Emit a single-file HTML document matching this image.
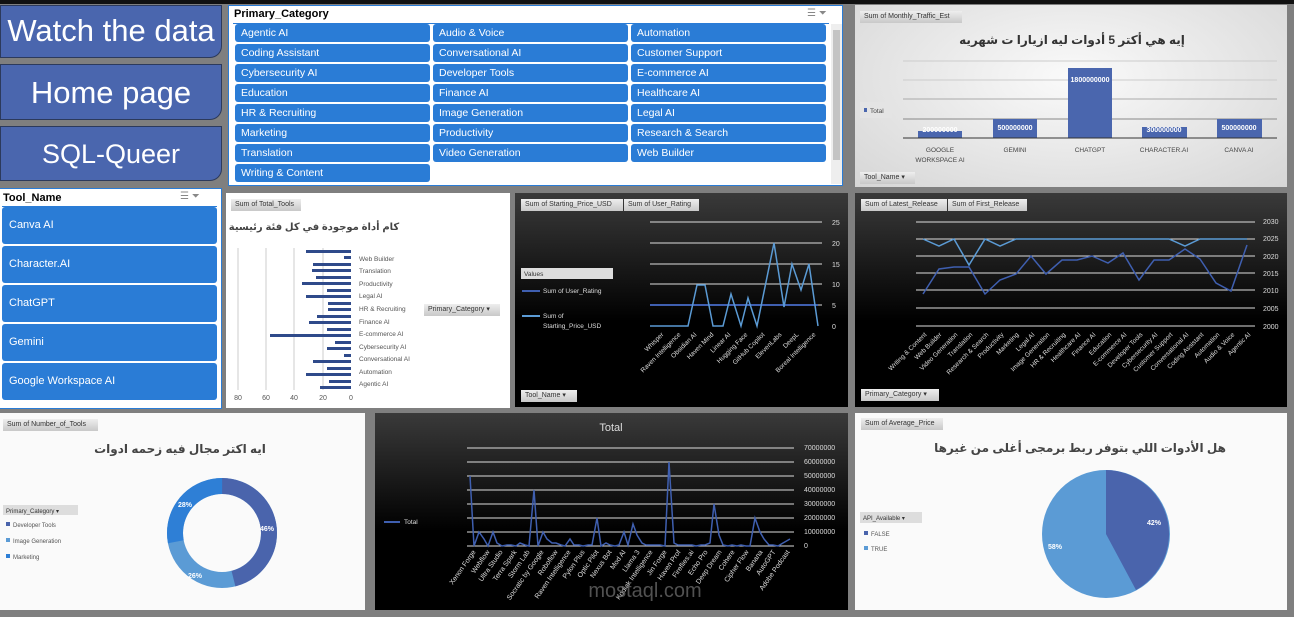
<!DOCTYPE html>
<html><head><meta charset="utf-8"><style>
*{margin:0;padding:0;box-sizing:border-box}
body{width:1294px;height:617px;background:#7f7f7f;position:relative;overflow:hidden;font-family:"Liberation Sans","Noto Sans CJK SC",sans-serif}
.a{position:absolute}
.btn{position:absolute;left:0;width:222px;background:#4a66ae;border:1px solid #2c3a5c;border-radius:0 0 12px 0;color:#fff;text-align:center;font-size:31px}
.it{position:absolute;height:18px;background:#2a7cd6;border-radius:3px;color:#fff;font-size:10.5px;line-height:18px;padding-left:6px}
.ti{position:absolute;left:2px;width:215px;height:37px;background:#2a7cd6;border-radius:3px;color:#fff;font-size:11px;line-height:37px;padding-left:7px}
.tag{position:absolute;background:linear-gradient(#eee,#c8c8c8);font-size:7px;color:#333;padding:2px 4px;height:12px;line-height:8px}
svg text{font-family:"Liberation Sans","DejaVu Sans",sans-serif}
</style></head><body>
<div class="a" style="left:0;top:0;width:1294px;height:4px;background:#111"></div>
<div class="btn" style="top:5px;height:53px;line-height:50px">Watch the data</div>
<div class="btn" style="top:64px;height:56px;line-height:56px">Home page</div>
<div class="btn" style="top:126px;height:55px;line-height:55px;font-size:27px">SQL-Queer</div>

<div class="a" style="left:228px;top:5px;width:615px;height:181px;background:#fff;border:1px solid #2a7cd6">
<div class="a" style="left:5px;top:2px;font-size:11px;font-weight:bold">Primary_Category</div>
<div class="a" style="left:578px;top:2px;font-size:10px;color:#888">☰ ⏷</div>
<div class="a" style="left:4px;top:17px;width:596px;height:1px;background:#2a7cd6"></div>
<div class="a" style="left:602px;top:18px;width:11px;height:160px;background:#eee"><div style="margin:6px 2px;height:130px;background:#c4c4c4"></div></div>
</div>
<div class="it" style="left:235px;top:24px;width:195px">Agentic AI</div><div class="it" style="left:433px;top:24px;width:195px">Audio &amp; Voice</div><div class="it" style="left:631px;top:24px;width:195px">Automation</div>
<div class="it" style="left:235px;top:44px;width:195px">Coding Assistant</div><div class="it" style="left:433px;top:44px;width:195px">Conversational AI</div><div class="it" style="left:631px;top:44px;width:195px">Customer Support</div>
<div class="it" style="left:235px;top:64px;width:195px">Cybersecurity AI</div><div class="it" style="left:433px;top:64px;width:195px">Developer Tools</div><div class="it" style="left:631px;top:64px;width:195px">E-commerce AI</div>
<div class="it" style="left:235px;top:84px;width:195px">Education</div><div class="it" style="left:433px;top:84px;width:195px">Finance AI</div><div class="it" style="left:631px;top:84px;width:195px">Healthcare AI</div>
<div class="it" style="left:235px;top:104px;width:195px">HR &amp; Recruiting</div><div class="it" style="left:433px;top:104px;width:195px">Image Generation</div><div class="it" style="left:631px;top:104px;width:195px">Legal AI</div>
<div class="it" style="left:235px;top:124px;width:195px">Marketing</div><div class="it" style="left:433px;top:124px;width:195px">Productivity</div><div class="it" style="left:631px;top:124px;width:195px">Research &amp; Search</div>
<div class="it" style="left:235px;top:144px;width:195px">Translation</div><div class="it" style="left:433px;top:144px;width:195px">Video Generation</div><div class="it" style="left:631px;top:144px;width:195px">Web Builder</div>
<div class="it" style="left:235px;top:164px;width:195px">Writing &amp; Content</div>

<div class="a" style="left:0;top:188px;width:222px;height:221px;background:#fff;border:1px solid #2a7cd6;border-left:none">
<div class="a" style="left:3px;top:3px;font-size:11px;font-weight:bold">Tool_Name</div>
<div class="a" style="left:180px;top:2px;font-size:10px;color:#888">☰ ⏷</div>
<div class="a" style="left:2px;top:17px;width:215px;height:1px;background:#2a7cd6"></div>
</div>
<div class="ti" style="top:207px">Canva AI</div>
<div class="ti" style="top:246px">Character.AI</div>
<div class="ti" style="top:285px">ChatGPT</div>
<div class="ti" style="top:324px">Gemini</div>
<div class="ti" style="top:363px">Google Workspace AI</div>

<div class="a" style="left:855px;top:5px;width:432px;height:182px;background:radial-gradient(ellipse at 50% 40%,#fafafa,#d6d6d6)"></div>
<svg class="a" style="left:0;top:0" width="1294" height="617">
<g font-size="6.5" fill="#444">
<line x1="903" y1="61" x2="1277" y2="61" stroke="#ccc"/><line x1="903" y1="80" x2="1277" y2="80" stroke="#ccc"/><line x1="903" y1="99" x2="1277" y2="99" stroke="#aaa"/><line x1="903" y1="119" x2="1277" y2="119" stroke="#888"/>
<rect x="918" y="131" width="44" height="7" fill="#4a66ae"/><rect x="993" y="119" width="44" height="19" fill="#4a66ae"/><rect x="1068" y="68" width="44" height="70" fill="#4a66ae"/><rect x="1142" y="127" width="45" height="11" fill="#4a66ae"/><rect x="1217" y="119" width="45" height="19" fill="#4a66ae"/>
<line x1="903" y1="138" x2="1277" y2="138" stroke="#333"/>
<g fill="#fff" font-weight="bold" font-size="7" text-anchor="middle"><text x="940" y="132">200000000</text><text x="1015" y="130">500000000</text><text x="1090" y="82">1800000000</text><text x="1164" y="132">300000000</text><text x="1239" y="130">500000000</text></g>
<g text-anchor="middle"><text x="940" y="152">GOOGLE</text><text x="940" y="162">WORKSPACE AI</text><text x="1015" y="152">GEMINI</text><text x="1090" y="152">CHATGPT</text><text x="1164" y="152">CHARACTER.AI</text><text x="1239" y="152">CANVA AI</text></g>
<rect x="860" y="102" width="32" height="16" fill="#e4e4e4"/><rect x="864" y="108" width="3" height="4" fill="#4a66ae"/><text x="870" y="113">Total</text>
</g>
<text x="1072" y="44" font-size="12" font-weight="bold" fill="#333" text-anchor="middle" font-family="DejaVu Sans">إيه هي أكتر 5 أدوات ليه ازيارا ت شهريه</text>
</svg>
<div class="tag" style="left:860px;top:11px;width:102px">Sum of Monthly_Traffic_Est</div>
<div class="tag" style="left:860px;top:172px;width:55px">Tool_Name ▾</div>

<div class="a" style="left:226px;top:193px;width:284px;height:215px;background:#fff"></div>
<div class="tag" style="left:231px;top:199px;width:70px">Sum of Total_Tools</div>
<div class="tag" style="left:424px;top:304px;width:76px">Primary_Category ▾</div>
<svg class="a" style="left:0;top:0" width="1294" height="617">
<g stroke="#ccc"><line x1="238" y1="248" x2="238" y2="390"/><line x1="266" y1="248" x2="266" y2="390"/><line x1="294" y1="248" x2="294" y2="390"/><line x1="323" y1="248" x2="323" y2="390"/></g>
<g fill="#2f4a8a">
<rect x="306" y="250" width="45" height="3"/><rect x="344" y="256" width="7" height="3"/><rect x="313" y="263" width="38" height="3"/><rect x="312" y="269" width="39" height="3"/><rect x="316" y="276" width="35" height="3"/><rect x="302" y="282" width="49" height="3"/><rect x="327" y="289" width="24" height="3"/><rect x="306" y="295" width="45" height="3"/><rect x="328" y="302" width="23" height="3"/><rect x="328" y="308" width="23" height="3"/><rect x="317" y="315" width="34" height="3"/><rect x="309" y="321" width="42" height="3"/><rect x="327" y="328" width="24" height="3"/><rect x="270" y="334" width="81" height="3"/><rect x="335" y="341" width="16" height="3"/><rect x="327" y="347" width="24" height="3"/><rect x="344" y="354" width="7" height="3"/><rect x="313" y="360" width="38" height="3"/><rect x="327" y="367" width="24" height="3"/><rect x="306" y="373" width="45" height="3"/><rect x="329" y="380" width="22" height="3"/><rect x="320" y="386" width="31" height="3"/>
</g>
<g font-size="6.5" fill="#555"><text x="359" y="261">Web Builder</text><text x="359" y="273">Translation</text><text x="359" y="286">Productivity</text><text x="359" y="298">Legal AI</text><text x="359" y="311">HR &amp; Recruiting</text><text x="359" y="324">Finance AI</text><text x="359" y="336">E-commerce AI</text><text x="359" y="349">Cybersecurity AI</text><text x="359" y="361">Conversational AI</text><text x="359" y="374">Automation</text><text x="359" y="386">Agentic AI</text></g>
<g font-size="7" fill="#555" text-anchor="middle"><text x="238" y="400">80</text><text x="266" y="400">60</text><text x="294" y="400">40</text><text x="323" y="400">20</text><text x="351" y="400">0</text></g>
<text x="314" y="230" font-size="10" font-weight="bold" fill="#444" text-anchor="middle" font-family="DejaVu Sans">كام أداة موجودة في كل فئة رئيسية</text>
</svg>

<div class="a" style="left:515px;top:193px;width:333px;height:214px;background:linear-gradient(#3a3a3a,#000 60%)"></div>
<div class="a" style="left:855px;top:193px;width:432px;height:214px;background:linear-gradient(#3a3a3a,#000 60%)"></div>
<div class="a" style="left:0;top:413px;width:365px;height:197px;background:#fafafa"></div>
<div class="a" style="left:375px;top:413px;width:473px;height:197px;background:linear-gradient(#3a3a3a,#000 60%)"></div>
<div class="a" style="left:855px;top:413px;width:432px;height:197px;background:#fafafa"></div>

<svg class="a" style="left:0;top:0" width="1294" height="617">
<g stroke="#ddd" stroke-width="1"><line x1="650" y1="222" x2="822" y2="222"/><line x1="650" y1="243" x2="822" y2="243"/><line x1="650" y1="264" x2="822" y2="264"/><line x1="650" y1="284" x2="822" y2="284"/><line x1="650" y1="305" x2="822" y2="305"/></g>
<g font-size="7" fill="#ddd"><text x="832" y="225">25</text><text x="832" y="246">20</text><text x="832" y="267">15</text><text x="832" y="287">10</text><text x="832" y="308">5</text><text x="832" y="329">0</text></g>
<polyline fill="none" stroke="#3f5fb0" stroke-width="2" points="650,305 818,305"/>
<polyline fill="none" stroke="#5b9bd5" stroke-width="1.5" points="650,326 688,326 697,285 705,285 713,326 723,326 731,294 741,326 748,298 757,326 774,243 784,307 792,264 801,290 809,264 818,326"/>
<rect x="521" y="268" width="92" height="11" fill="#ddd"/><text x="524" y="276" font-size="6.5" fill="#333">Values</text>
<line x1="522" y1="291" x2="540" y2="291" stroke="#3f5fb0" stroke-width="2"/><text x="543" y="293" font-size="6.5" fill="#ddd">Sum of User_Rating</text>
<line x1="522" y1="316" x2="540" y2="316" stroke="#5b9bd5" stroke-width="2"/><text x="543" y="318" font-size="6.5" fill="#ddd">Sum of</text><text x="543" y="328" font-size="6.5" fill="#ddd">Starting_Price_USD</text>
<g font-size="6.5" fill="#ddd" text-anchor="end">
<text transform="translate(664,335) rotate(-45)">Whisper</text><text transform="translate(681,335) rotate(-45)">Raven Intelligence</text><text transform="translate(697,335) rotate(-45)">Obsidian AI</text><text transform="translate(714,335) rotate(-45)">Haven Mind</text><text transform="translate(731,335) rotate(-45)">Linear AI</text><text transform="translate(748,335) rotate(-45)">Hugging Face</text><text transform="translate(765,335) rotate(-45)">GitHub Copilot</text><text transform="translate(782,335) rotate(-45)">ElevenLabs</text><text transform="translate(799,335) rotate(-45)">DeepL</text><text transform="translate(816,335) rotate(-45)">Boreal Intelligence</text></g>

<g stroke="#ddd"><line x1="916" y1="222" x2="1255" y2="222"/><line x1="916" y1="239" x2="1255" y2="239"/><line x1="916" y1="256" x2="1255" y2="256"/><line x1="916" y1="273" x2="1255" y2="273"/><line x1="916" y1="290" x2="1255" y2="290"/><line x1="916" y1="308" x2="1255" y2="308"/><line x1="916" y1="326" x2="1255" y2="326"/></g>
<g font-size="7" fill="#ddd"><text x="1263" y="224">2030</text><text x="1263" y="241">2025</text><text x="1263" y="259">2020</text><text x="1263" y="276">2015</text><text x="1263" y="293">2010</text><text x="1263" y="311">2005</text><text x="1263" y="329">2000</text></g>
<polyline fill="none" stroke="#3f5fb0" stroke-width="1.5" points="923,294 939,269 954,267 969,267 985,294 1000,280 1016,274 1031,256 1046,274 1062,260 1077,260 1092,256 1108,263 1123,253 1139,280 1154,260 1169,260 1185,249 1200,259 1216,283 1231,291 1247,245"/>
<polyline fill="none" stroke="#5b9bd5" stroke-width="1.5" points="923,239 939,246 954,239 969,265 985,239 1000,246 1016,239 1031,239 1046,239 1062,239 1077,239 1092,239 1108,239 1123,239 1139,239 1154,239 1169,239 1185,246 1200,239 1216,239 1231,239 1247,239"/>
<g font-size="6.5" fill="#ddd" text-anchor="end">
<text transform="translate(927,335) rotate(-45)">Writing &amp; Content</text><text transform="translate(942,335) rotate(-45)">Web Builder</text><text transform="translate(958,335) rotate(-45)">Video Generation</text><text transform="translate(973,335) rotate(-45)">Translation</text><text transform="translate(989,335) rotate(-45)">Research &amp; Search</text><text transform="translate(1004,335) rotate(-45)">Productivity</text><text transform="translate(1019,335) rotate(-45)">Marketing</text><text transform="translate(1035,335) rotate(-45)">Legal AI</text><text transform="translate(1050,335) rotate(-45)">Image Generation</text><text transform="translate(1066,335) rotate(-45)">HR &amp; Recruiting</text><text transform="translate(1081,335) rotate(-45)">Healthcare AI</text><text transform="translate(1096,335) rotate(-45)">Finance AI</text><text transform="translate(1112,335) rotate(-45)">Education</text><text transform="translate(1127,335) rotate(-45)">E-commerce AI</text><text transform="translate(1143,335) rotate(-45)">Developer Tools</text><text transform="translate(1158,335) rotate(-45)">Cybersecurity AI</text><text transform="translate(1173,335) rotate(-45)">Customer Support</text><text transform="translate(1189,335) rotate(-45)">Conversational AI</text><text transform="translate(1204,335) rotate(-45)">Coding Assistant</text><text transform="translate(1220,335) rotate(-45)">Automation</text><text transform="translate(1235,335) rotate(-45)">Audio &amp; Voice</text><text transform="translate(1251,335) rotate(-45)">Agentic AI</text></g>

<text x="611" y="431" font-size="11" fill="#ddd" text-anchor="middle">Total</text>
<g stroke="#ddd"><line x1="467" y1="448" x2="794" y2="448"/><line x1="467" y1="462" x2="794" y2="462"/><line x1="467" y1="476" x2="794" y2="476"/><line x1="467" y1="490" x2="794" y2="490"/><line x1="467" y1="504" x2="794" y2="504"/><line x1="467" y1="518" x2="794" y2="518"/><line x1="467" y1="532" x2="794" y2="532"/><line x1="467" y1="546" x2="794" y2="546"/></g>
<g font-size="7" fill="#ddd"><text x="804" y="450">70000000</text><text x="804" y="464">60000000</text><text x="804" y="478">50000000</text><text x="804" y="492">40000000</text><text x="804" y="506">30000000</text><text x="804" y="520">20000000</text><text x="804" y="534">10000000</text><text x="804" y="548">0</text></g>
<polyline fill="none" stroke="#3f5fb0" stroke-width="1.5" points="470,476 474,546 479,532 484,539 488,546 493,532 497,543 502,546 507,545 511,545 516,546 520,543 525,545 529,546 534,490 538,546 543,532 547,539 552,543 556,543 561,545 565,546 570,539 574,545 579,545 583,546 588,545 592,545 597,518 601,546 606,543 610,545 615,546 619,545 624,532 628,545 633,524 637,535 642,543 646,545 651,545 655,545 660,545 665,546 669,462 674,543 678,545 683,545 687,545 692,545 696,546 701,545 705,545 710,543 714,504 719,535 723,545 728,546 732,545 737,546 741,545 746,546 750,546 755,518 760,532 764,539 769,545 773,545 778,546 783,543 790,539"/>
<line x1="384" y1="522" x2="400" y2="522" stroke="#3f5fb0" stroke-width="2"/><text x="404" y="524" font-size="6.5" fill="#ddd">Total</text>
<g font-size="7" fill="#ddd" text-anchor="end">
<text transform="translate(476,552) rotate(-55)">Xenon Forge</text><text transform="translate(490,552) rotate(-55)">Webflow</text><text transform="translate(503,552) rotate(-55)">Ultra Studio</text><text transform="translate(517,552) rotate(-55)">Terra Spark</text><text transform="translate(530,552) rotate(-55)">Storm Lab</text><text transform="translate(544,552) rotate(-55)">Socratic by Google</text><text transform="translate(558,552) rotate(-55)">Roboflow</text><text transform="translate(571,552) rotate(-55)">Raven Intelligence</text><text transform="translate(585,552) rotate(-55)">Pylon Plus</text><text transform="translate(599,552) rotate(-55)">Optic Pilot</text><text transform="translate(612,552) rotate(-55)">Nexus Bot</text><text transform="translate(626,552) rotate(-55)">Mod AI</text><text transform="translate(640,552) rotate(-55)">Llama 3</text><text transform="translate(653,552) rotate(-55)">Kodiak Intelligence</text><text transform="translate(667,552) rotate(-55)">Jin Forge</text><text transform="translate(681,552) rotate(-55)">Haven Prof</text><text transform="translate(694,552) rotate(-55)">Fireflies.ai</text><text transform="translate(708,552) rotate(-55)">Echo Pro</text><text transform="translate(722,552) rotate(-55)">Deep Dream</text><text transform="translate(735,552) rotate(-55)">Cohere</text><text transform="translate(749,552) rotate(-55)">Cipher Flow</text><text transform="translate(763,552) rotate(-55)">Banana</text><text transform="translate(776,552) rotate(-55)">AutoGPT</text><text transform="translate(790,552) rotate(-55)">Adobe Podcast</text></g>
<text x="645" y="597" font-size="20" fill="#666" opacity="0.8" text-anchor="middle">mostaql.com</text>

<text x="180" y="453" font-size="12" font-weight="bold" fill="#444" text-anchor="middle" font-family="DejaVu Sans">ايه اكتر مجال فيه زحمه ادوات</text>
<circle cx="222" cy="533" r="47" fill="none" stroke="#5b9bd5" stroke-width="16"/>
<circle cx="222" cy="533" r="47" fill="none" stroke="#4a64ac" stroke-width="16" stroke-dasharray="135.8 400" transform="rotate(-90 222 533)"/>
<circle cx="222" cy="533" r="47" fill="none" stroke="#2e7fd6" stroke-width="16" stroke-dasharray="82.7 400" transform="rotate(169.2 222 533)"/>
<g font-size="7" font-weight="bold" fill="#fff"><text x="260" y="531">46%</text><text x="188" y="578">26%</text><text x="178" y="507">28%</text></g>
<rect x="3" y="505" width="75" height="10" fill="#ddd"/><text x="6" y="513" font-size="6" fill="#333">Primary_Category ▾</text>
<g font-size="6" fill="#555"><rect x="6" y="522" width="4" height="4" fill="#4a64ac"/><text x="13" y="527">Developer Tools</text><rect x="6" y="538" width="4" height="4" fill="#5b9bd5"/><text x="13" y="543">Image Generation</text><rect x="6" y="554" width="4" height="4" fill="#2e7fd6"/><text x="13" y="559">Marketing</text></g>

<text x="1080" y="452" font-size="12" font-weight="bold" fill="#444" text-anchor="middle" font-family="DejaVu Sans">هل الأدوات اللي بتوفر ربط برمجى أغلى من غيرها</text>
<circle cx="1106" cy="534" r="64" fill="#5b9bd5"/>
<path d="M1106,534 L1106,470 A64,64 0 0 1 1136,590 Z" fill="#4a64ac"/>
<g font-size="7" font-weight="bold" fill="#fff"><text x="1147" y="525">42%</text><text x="1048" y="549">58%</text></g>
<rect x="860" y="512" width="62" height="11" fill="#ddd"/><text x="863" y="520" font-size="6" fill="#333">API_Available ▾</text>
<g font-size="6" fill="#555"><rect x="864" y="531" width="4" height="4" fill="#4a64ac"/><text x="871" y="536">FALSE</text><rect x="864" y="546" width="4" height="4" fill="#5b9bd5"/><text x="871" y="551">TRUE</text></g>
</svg>
<div class="tag" style="left:521px;top:199px;width:102px">Sum of Starting_Price_USD</div>
<div class="tag" style="left:624px;top:199px;width:75px">Sum of User_Rating</div>
<div class="tag" style="left:521px;top:390px;width:56px">Tool_Name ▾</div>
<div class="tag" style="left:861px;top:199px;width:86px">Sum of Latest_Release</div>
<div class="tag" style="left:948px;top:199px;width:79px">Sum of First_Release</div>
<div class="tag" style="left:861px;top:389px;width:78px">Primary_Category ▾</div>
<div class="tag" style="left:3px;top:419px;width:95px">Sum of Number_of_Tools</div>
<div class="tag" style="left:861px;top:418px;width:82px">Sum of Average_Price</div>
</body></html>
